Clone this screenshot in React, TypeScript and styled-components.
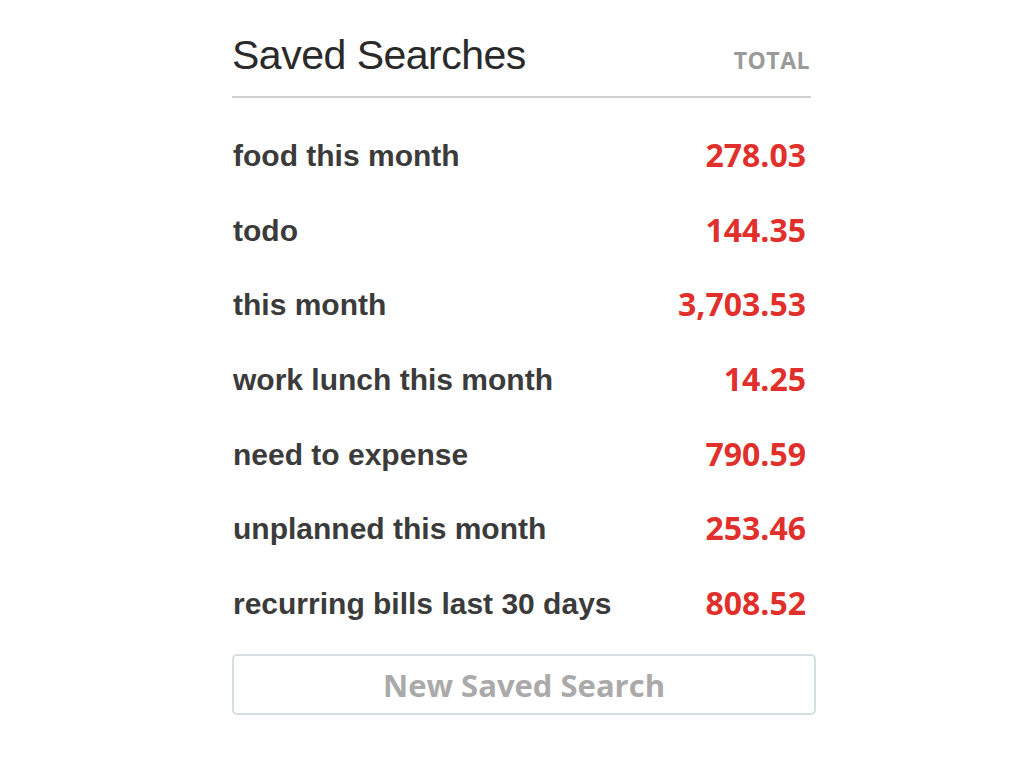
import styled, { createGlobalStyle } from 'styled-components';

const GlobalStyle = createGlobalStyle`
  html, body {
    margin: 0;
    padding: 0;
    background: #fff;
  }
`;

const Page = styled.div`
  display: flex;
  justify-content: flex-start;
  padding: 31px 0 0 232px;
`;

const Panel = styled.section`
  width: 584px;
  display: flex;
  flex-direction: column;
`;

const Header = styled.header`
  width: 579px;
  display: flex;
  align-items: baseline;
  justify-content: space-between;
  padding-bottom: 17px;
  border-bottom: 2px solid #d0d0d0;
`;

const Title = styled.h2`
  margin: 0;
  font-family: 'Liberation Sans', Arial, sans-serif;
  font-weight: 300;
  font-size: 41px;
  line-height: 48px;
  color: #2a2a2a;
  letter-spacing: -0.5px;
`;

const TotalLabel = styled.span`
  font-family: 'Open Sans', 'Liberation Sans', sans-serif;
  font-weight: 700;
  font-size: 23px;
  color: #9a9a9a;
  letter-spacing: 0.5px;
  padding-right: 1px;
`;

const List = styled.ul`
  list-style: none;
  margin: 0;
  padding: 20px 0 12px;
  width: 579px;
`;

const Row = styled.li`
  display: flex;
  justify-content: space-between;
  align-items: center;
  height: 74.6px;
`;

const Name = styled.span`
  font-family: 'Liberation Sans', Arial, sans-serif;
  font-weight: 700;
  font-size: 30px;
  line-height: 36px;
  color: #3b3b3b;
  padding-left: 1px;
  padding-top: 2px;
`;

const Amount = styled.span`
  font-family: 'Open Sans', 'Liberation Sans', sans-serif;
  font-weight: 700;
  font-size: 32px;
  line-height: 36px;
  color: #e1302b;
  padding-right: 5px;
`;

const NewButton = styled.button`
  width: 584px;
  height: 61px;
  margin-top: 2px;
  padding: 0;
  background: #fff;
  border: 2px solid #d6dfdf;
  border-radius: 5px;
  font-family: 'Open Sans', 'Liberation Sans', sans-serif;
  font-weight: 700;
  font-size: 31px;
  line-height: 56px;
  color: #aaaaaa;
  cursor: pointer;
`;

const searches = [
  { name: 'food this month', total: '278.03' },
  { name: 'todo', total: '144.35' },
  { name: 'this month', total: '3,703.53' },
  { name: 'work lunch this month', total: '14.25' },
  { name: 'need to expense', total: '790.59' },
  { name: 'unplanned this month', total: '253.46' },
  { name: 'recurring bills last 30 days', total: '808.52' },
];

export default function App() {
  return (
    <>
      <GlobalStyle />
      <Page>
        <Panel>
          <Header>
            <Title>Saved Searches</Title>
            <TotalLabel>TOTAL</TotalLabel>
          </Header>
          <List>
            {searches.map((s) => (
              <Row key={s.name}>
                <Name>{s.name}</Name>
                <Amount>{s.total}</Amount>
              </Row>
            ))}
          </List>
          <NewButton>New Saved Search</NewButton>
        </Panel>
      </Page>
    </>
  );
}
